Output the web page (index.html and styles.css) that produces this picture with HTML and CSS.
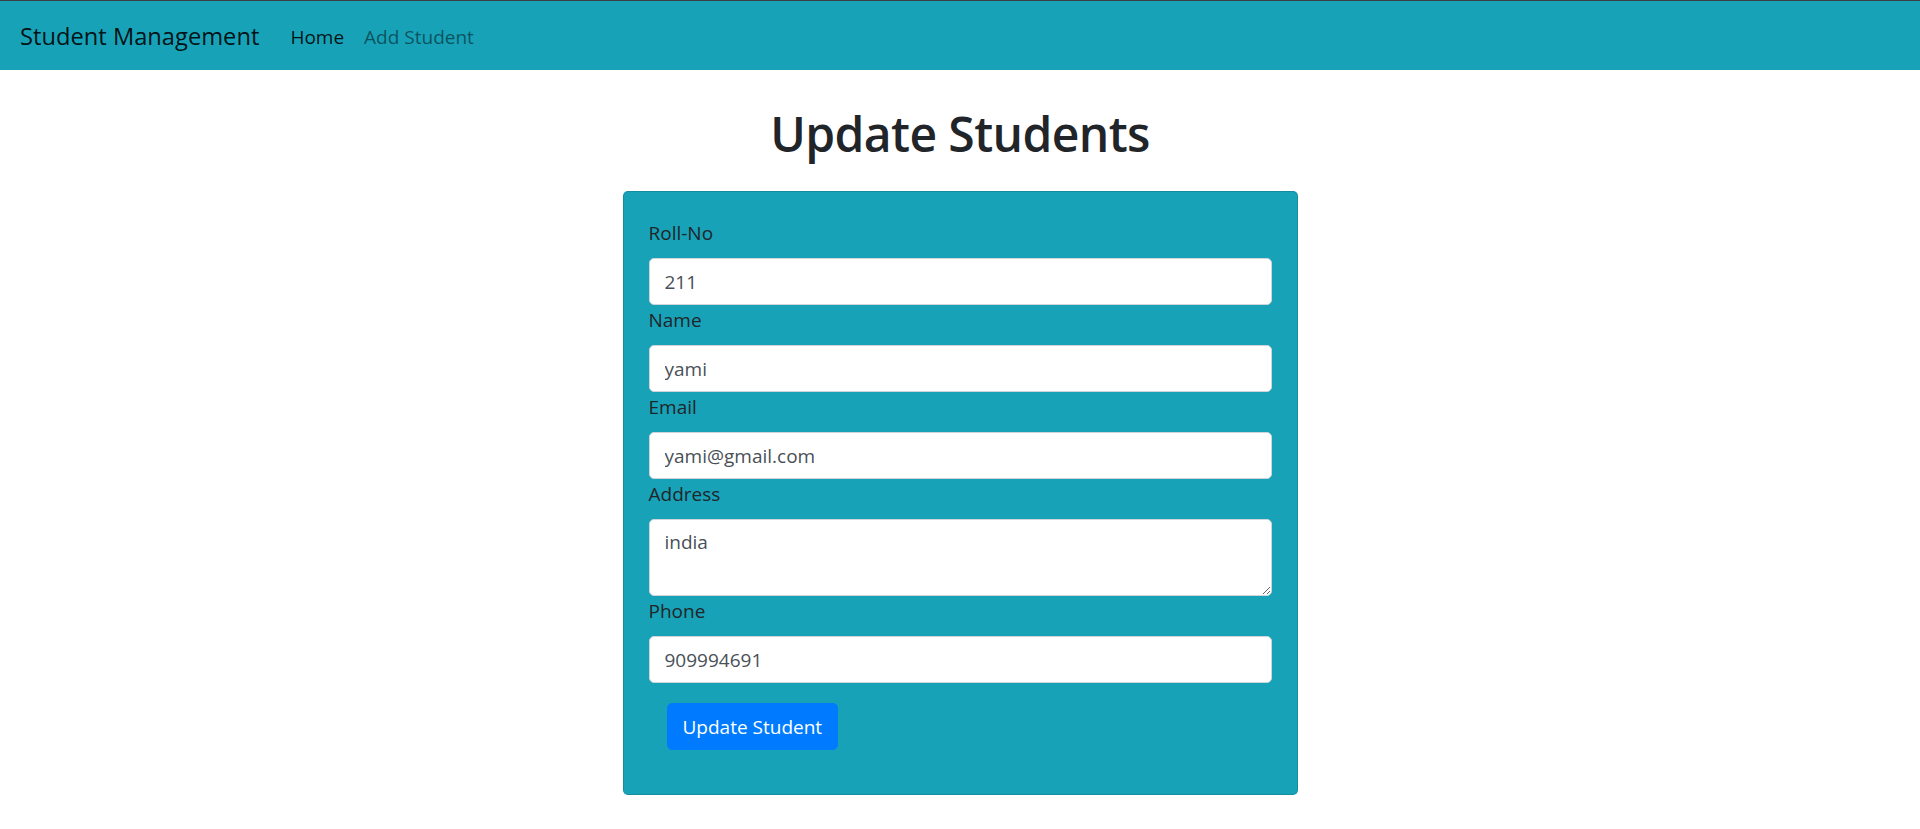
FILE: index.html
```html
<!DOCTYPE html>
<html lang="en">
<head>
<meta charset="utf-8">
<title>Student Management</title>
<link rel="stylesheet" href="styles.css">
</head>
<body>
<nav class="navbar">
  <a class="brand" href="#">Student Management</a>
  <ul class="nav-links">
    <li><a class="nav-link active" href="#">Home</a></li>
    <li><a class="nav-link" href="#">Add Student</a></li>
  </ul>
</nav>
<main class="main">
  <h1 class="title">Update Students</h1>
  <form class="card">
    <div class="field">
      <label class="label" for="roll">Roll-No</label>
      <input class="control" id="roll" type="text" value="211">
    </div>
    <div class="field">
      <label class="label" for="name">Name</label>
      <input class="control" id="name" type="text" value="yami">
    </div>
    <div class="field">
      <label class="label" for="email">Email</label>
      <input class="control" id="email" type="text" value="yami@gmail.com">
    </div>
    <div class="field">
      <label class="label" for="address">Address</label>
      <textarea class="control area" id="address" rows="2">india</textarea>
    </div>
    <div class="field">
      <label class="label" for="phone">Phone</label>
      <input class="control" id="phone" type="text" value="909994691">
    </div>
    <div class="actions">
      <button class="btn" type="button">Update Student</button>
    </div>
  </form>
</main>
</body>
</html>
```

FILE: styles.css
```css
* { box-sizing: border-box; }

html, body {
  margin: 0;
  padding: 0;
}

body {
  font-family: "Segoe UI", "Open Sans", "Noto Sans", Arial, sans-serif;
  font-size: 19px;
  line-height: 1.5;
  color: #212529;
  background: #fff;
}

.navbar {
  height: 70px;
  background: #17a2b8;
  border-top: 1px solid #3a3f44;
  display: flex;
  align-items: center;
  padding: 3px 20px 0;
}

.brand {
  font-size: 23.7px;
  line-height: 1.5;
  color: rgba(0, 0, 0, 0.9);
  text-decoration: none;
  margin-right: 21px;
  white-space: nowrap;
}

.nav-links {
  list-style: none;
  margin: 0;
  padding: 0;
  display: flex;
}

.nav-link {
  display: block;
  padding: 10px 10px;
  color: rgba(0, 0, 0, 0.5);
  text-decoration: none;
}

.nav-link.active {
  color: rgba(0, 0, 0, 0.9);
}

.main {
  display: flex;
  flex-direction: column;
  align-items: center;
  padding-top: 34px;
}

.title {
  margin: 0 0 27px;
  font-size: 48px;
  font-weight: 600;
  letter-spacing: -0.6px;
  line-height: 60px;
  color: #212529;
}

.card {
  width: 675px;
  background: #17a2b8;
  border: 1px solid rgba(0, 0, 0, 0.125);
  border-radius: 5px;
  padding: 26px 25px 44px;
  display: flex;
  flex-direction: column;
}

.field {
  display: flex;
  flex-direction: column;
}

.label {
  display: block;
  line-height: 30px;
  margin-bottom: 10px;
  color: #212529;
}

.control {
  display: block;
  width: 100%;
  height: 47px;
  padding: 7px 15px;
  font-family: inherit;
  font-size: 19px;
  line-height: 30px;
  color: #495057;
  background: #fff;
  border: 1px solid #ced4da;
  border-radius: 5px;
  margin: 0;
}

.area {
  height: 77px;
  resize: vertical;
}

.actions {
  padding: 20px 18px 0;
}

.btn {
  font-family: inherit;
  font-size: 19px;
  line-height: 30px;
  padding: 7.5px 15px;
  height: 47px;
  color: #fff;
  background: #007bff;
  border: 1px solid #007bff;
  border-radius: 5px;
  cursor: pointer;
}
```
